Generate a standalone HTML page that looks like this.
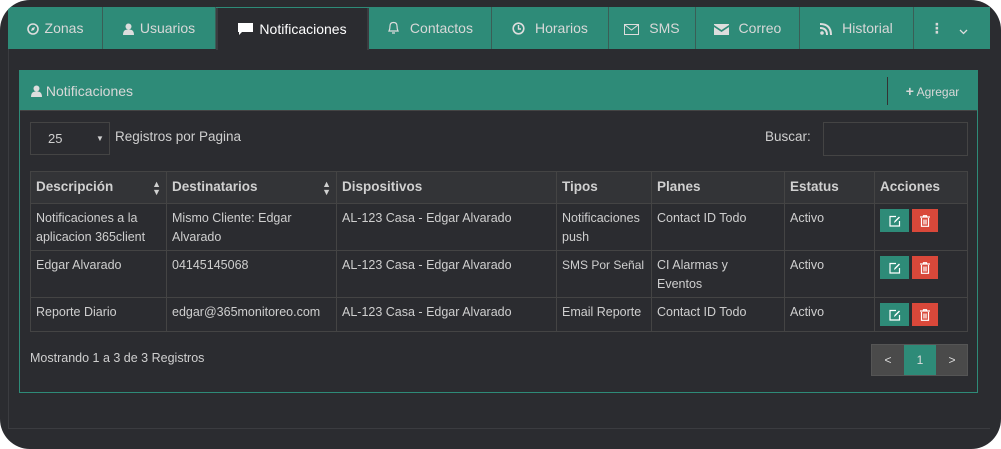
<!DOCTYPE html>
<html><head><meta charset="utf-8"><style>
*{box-sizing:border-box;margin:0;padding:0}
body{width:1001px;height:449px;background:#fff;overflow:hidden;font-family:"Liberation Sans","DejaVu Sans",sans-serif;font-size:13px;color:#cfcfcf;position:relative}
.card{position:absolute;left:0;top:0;width:1001px;height:449px;background:#2b2c30;border-radius:30px;overflow:hidden}
.inner{position:absolute;left:8px;top:7px;width:982px;height:422px;border-left:1px solid #3b3c40;border-bottom:1px solid #3b3c40}
.tabs{position:absolute;left:8px;top:7px;height:42px;width:982px;background:#2e8b78}
.tab{position:absolute;top:0;height:42px;border-right:1px solid #3a5e56;color:#d8d8d8;font-size:14px;line-height:42px;text-align:center;white-space:nowrap}
.tab.act{background:#2b2c30;color:#fff;border-right:2px solid #3b3c40;border-left:2px solid #3b3c40;top:1px}
.tab svg{vertical-align:-2px;margin-right:6px}
.panel{position:absolute;left:19px;top:70px;width:959px;height:323px;border:1px solid #2e8b78}
.ph{position:absolute;left:0;top:0;width:957px;height:40px;background:#2e8b78;border-bottom:1px solid #444;color:#d8d8d8;font-size:14px;line-height:40px;padding-left:11px}
.add{position:absolute;right:0;top:6px;height:28px;border-left:1px solid #333;width:90px;line-height:28px;font-size:12px;text-align:center}
.abs{position:absolute}
table{position:absolute;left:30px;top:171px;width:938px;border-collapse:collapse}
td,th{border:1px solid #444;vertical-align:top;text-align:left;padding:4px 5px 2px;line-height:19px;font-size:12.5px}
th{background:#333437;font-weight:bold;font-size:13.5px;height:32px;line-height:22px;color:#d0d0d0}
tr.r td{padding-top:5px}
.btn{display:inline-block;width:29px;height:23px;margin-top:0;vertical-align:top;text-align:center;padding-top:5px}
.sort{float:right;font-size:9px;line-height:8px;margin-top:4px}
</style></head><body>
<div class="card">
<div class="inner"></div>
<div class="tabs">
<div class="tab" style="left:0;width:95px"><svg width="12" height="12" viewBox="0 0 12 12"><circle cx="6" cy="6" r="5" fill="none" stroke="#ddd" stroke-width="1.6"/><path d="M4 8L5 5L8 4L7 7Z" fill="#ddd"/></svg>Zonas</div>
<div class="tab" style="left:95px;width:113px"><svg width="11" height="12" viewBox="0 0 11 12"><circle cx="5.5" cy="3.5" r="3" fill="#ddd"/><path d="M0 12Q0 6 5.5 6.5Q11 6 11 12Z" fill="#ddd"/></svg>Usuarios</div>
<div class="tab act" style="left:208px;width:153px"><svg width="15" height="13" viewBox="0 0 15 13"><path d="M0 0H15V9H4L1 12V9H0Z" fill="#fff"/></svg>Notificaciones</div>
<div class="tab" style="left:361px;width:123px"><svg width="13" height="14" viewBox="0 0 13 14"><path d="M2 10Q3 8 3 5Q3 1.5 6.5 1.5Q10 1.5 10 5Q10 8 11 10Z M5 12H8" fill="none" stroke="#ddd" stroke-width="1.2"/></svg> Contactos</div>
<div class="tab" style="left:484px;width:117px"><svg width="13" height="13" viewBox="0 0 13 13"><circle cx="6.5" cy="6.5" r="5.3" fill="none" stroke="#ddd" stroke-width="1.6"/><path d="M6.5 3V7H9" fill="none" stroke="#ddd" stroke-width="1.4"/></svg> Horarios</div>
<div class="tab" style="left:601px;width:87px"><svg width="15" height="11" viewBox="0 0 15 11"><rect x=".5" y=".5" width="14" height="10" fill="none" stroke="#ddd"/><path d="M1 1L7.5 6L14 1" fill="none" stroke="#ddd"/></svg> SMS</div>
<div class="tab" style="left:688px;width:104px"><svg width="15" height="11" viewBox="0 0 15 11"><path d="M0 0H15V1L7.5 6L0 1Z M0 3L7.5 8L15 3V11H0Z" fill="#ddd"/></svg> Correo</div>
<div class="tab" style="left:792px;width:114px"><svg width="12" height="12" viewBox="0 0 12 12"><circle cx="2" cy="10" r="1.8" fill="#ddd"/><path d="M0 5Q7 5 7 12M0 1Q11 1 11 12" fill="none" stroke="#ddd" stroke-width="2"/></svg> Historial</div>
<div class="tab" style="left:906px;width:76px;border-right:none"><span style="font-weight:bold">&#8942;</span>&nbsp;&nbsp;&nbsp;&nbsp;<svg width="9" height="6" viewBox="0 0 9 6"><path d="M1 1L4.5 4.5L8 1" fill="none" stroke="#ddd" stroke-width="1.3"/></svg></div>
</div>
<div class="panel">
<div class="ph"><svg width="11" height="12" viewBox="0 0 11 12" style="vertical-align:-1px"><circle cx="5.5" cy="3.5" r="3" fill="#ddd"/><path d="M0 12Q0 6 5.5 6.5Q11 6 11 12Z" fill="#ddd"/></svg> Notificaciones
<div class="add"><b style="font-size:14px">+</b> Agregar</div></div>
</div>
<div class="abs" style="left:30px;top:122px;width:80px;height:33px;border:1px solid #444;line-height:31px;padding-left:17px;font-size:13px">25<span style="position:absolute;left:65px;font-size:8px">&#9660;</span></div>
<div class="abs" style="left:115px;top:129px;font-size:13.5px">Registros por Pagina</div>
<div class="abs" style="left:765px;top:129px;font-size:13.5px">Buscar:</div>
<div class="abs" style="left:823px;top:122px;width:145px;height:34px;border:1px solid #444"></div>
<table>
<tr><th style="width:136px">Descripción<span class="sort">&#9650;<br>&#9660;</span></th><th style="width:170px">Destinatarios<span class="sort">&#9650;<br>&#9660;</span></th><th style="width:220px">Dispositivos</th><th style="width:95px">Tipos</th><th style="width:133px">Planes</th><th style="width:90px">Estatus</th><th>Acciones</th></tr>
<tr class="r" style="height:47px"><td>Notificaciones a la aplicacion 365client</td><td>Mismo Cliente: Edgar Alvarado</td><td>AL-123 Casa - Edgar Alvarado</td><td>Notificaciones push</td><td>Contact ID Todo</td><td>Activo</td><td><span class="btn" style="background:#2e8b78;margin-left:0"><svg width="12" height="12" viewBox="0 0 12 12"><path d="M7 1.5H1V11H10.5V6" fill="none" stroke="#fff" stroke-width="1.2"/><path d="M5 8L5.5 6L10 1.5L11 2.5L6.5 7Z" fill="#fff"/></svg></span> <span class="btn" style="background:#d9483a;width:26px"><svg width="10" height="12" viewBox="0 0 10 12"><path d="M0 2H10M3.5 2V0.7H6.5V2M1.5 3V11.3H8.5V3M4 4.5V9.5M6 4.5V9.5" fill="none" stroke="#fff" stroke-width="1.2"/></svg></span></td></tr>
<tr class="r" style="height:47px"><td>Edgar Alvarado</td><td>04145145068</td><td>AL-123 Casa - Edgar Alvarado</td><td style="white-space:nowrap;font-size:12px">SMS Por Señal</td><td>CI Alarmas y<br>Eventos</td><td>Activo</td><td><span class="btn" style="background:#2e8b78"><svg width="12" height="12" viewBox="0 0 12 12"><path d="M7 1.5H1V11H10.5V6" fill="none" stroke="#fff" stroke-width="1.2"/><path d="M5 8L5.5 6L10 1.5L11 2.5L6.5 7Z" fill="#fff"/></svg></span> <span class="btn" style="background:#d9483a;width:26px"><svg width="10" height="12" viewBox="0 0 10 12"><path d="M0 2H10M3.5 2V0.7H6.5V2M1.5 3V11.3H8.5V3M4 4.5V9.5M6 4.5V9.5" fill="none" stroke="#fff" stroke-width="1.2"/></svg></span></td></tr>
<tr class="r" style="height:34px"><td>Reporte Diario</td><td>edgar@365monitoreo.com</td><td>AL-123 Casa - Edgar Alvarado</td><td>Email Reporte</td><td>Contact ID Todo</td><td>Activo</td><td><span class="btn" style="background:#2e8b78"><svg width="12" height="12" viewBox="0 0 12 12"><path d="M7 1.5H1V11H10.5V6" fill="none" stroke="#fff" stroke-width="1.2"/><path d="M5 8L5.5 6L10 1.5L11 2.5L6.5 7Z" fill="#fff"/></svg></span> <span class="btn" style="background:#d9483a;width:26px"><svg width="10" height="12" viewBox="0 0 10 12"><path d="M0 2H10M3.5 2V0.7H6.5V2M1.5 3V11.3H8.5V3M4 4.5V9.5M6 4.5V9.5" fill="none" stroke="#fff" stroke-width="1.2"/></svg></span></td></tr>
</table>
<div class="abs" style="left:30px;top:351px;font-size:12.5px">Mostrando 1 a 3 de 3 Registros</div>
<div class="abs" style="left:871px;top:344px;width:97px;height:32px;border:1px solid #555;background:#4a4a4a;font-size:12px;line-height:30px;color:#ddd">
<span class="abs" style="left:0;width:32px;text-align:center">&lt;</span>
<span class="abs" style="left:32px;width:32px;height:30px;background:#2e8b78;text-align:center">1</span>
<span class="abs" style="left:64px;width:32px;text-align:center">&gt;</span></div>
</div>
</body></html>
